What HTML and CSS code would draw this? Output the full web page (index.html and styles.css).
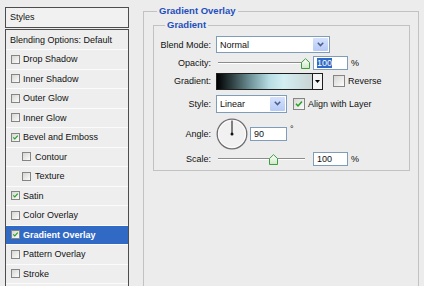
FILE: index.html
```html
<!DOCTYPE html>
<html>
<head>
<meta charset="utf-8">
<link rel="stylesheet" href="styles.css">
</head>
<body>
<div class="dialog">
  <aside class="styles-panel">
    <div class="styles-head">Styles</div>
    <ul class="style-list">
      <li class="blend">Blending Options: Default</li>
      <li><span class="cb"></span>Drop Shadow</li>
      <li><span class="cb"></span>Inner Shadow</li>
      <li><span class="cb"></span>Outer Glow</li>
      <li><span class="cb"></span>Inner Glow</li>
      <li><span class="cb"><svg viewBox="0 0 9 9"><path d="M1.6 4.3 L3.6 6.4 L7.4 2.2" fill="none" stroke="#23a323" stroke-width="1.5"/></svg></span>Bevel and Emboss</li>
      <li class="sub"><span class="cb"></span>Contour</li>
      <li class="sub"><span class="cb"></span>Texture</li>
      <li><span class="cb"><svg viewBox="0 0 9 9"><path d="M1.6 4.3 L3.6 6.4 L7.4 2.2" fill="none" stroke="#23a323" stroke-width="1.5"/></svg></span>Satin</li>
      <li><span class="cb"></span>Color Overlay</li>
      <li class="active"><span class="cb"><svg viewBox="0 0 9 9"><path d="M1.6 4.3 L3.6 6.4 L7.4 2.2" fill="none" stroke="#23a323" stroke-width="1.5"/></svg></span>Gradient Overlay</li>
      <li><span class="cb"></span>Pattern Overlay</li>
      <li><span class="cb"></span>Stroke</li>
    </ul>
  </aside>

  <fieldset class="group outer">
    <legend>Gradient Overlay</legend>
    <fieldset class="group inner">
      <legend>Gradient</legend>
      <div class="form">
        <div class="lbl">Blend Mode:</div>
        <div class="ctl">
          <div class="select blend-sel">
            <span class="val">Normal</span>
            <span class="btn"><svg width="7" height="5" viewBox="0 0 7 5"><path d="M0.8 0.8 L3.5 3.6 L6.2 0.8" fill="none" stroke="#4a5f8a" stroke-width="1.5"/></svg></span>
          </div>
        </div>

        <div class="lbl">Opacity:</div>
        <div class="ctl">
          <div class="slider">
            <div class="track"></div>
            <svg class="thumb thumb-opacity" width="9" height="11" viewBox="0 0 9 11"><defs><linearGradient id="tg1" x1="0" y1="0" x2="0" y2="1"><stop offset="0" stop-color="#ffffff"/><stop offset="1" stop-color="#cfe8c6"/></linearGradient></defs><path d="M0.5 10.5 V4.5 L4.5 0.7 L8.5 4.5 V10.5 Z" fill="url(#tg1)" stroke="#3c9e3c"/></svg>
          </div>
          <div class="num"><span class="sel">100</span></div>
          <span class="unit">%</span>
        </div>

        <div class="lbl">Gradient:</div>
        <div class="ctl">
          <div class="grad">
            <div class="grad-fill"></div>
            <div class="grad-btn"><svg width="5" height="3" viewBox="0 0 5 3"><path d="M0 0 H5 L2.5 3 Z" fill="#000"/></svg></div>
          </div>
          <span class="check reverse"><span class="cb lg"></span>Reverse</span>
        </div>

        <div class="lbl">Style:</div>
        <div class="ctl">
          <div class="select style-sel">
            <span class="val">Linear</span>
            <span class="btn"><svg width="7" height="5" viewBox="0 0 7 5"><path d="M0.8 0.8 L3.5 3.6 L6.2 0.8" fill="none" stroke="#4a5f8a" stroke-width="1.5"/></svg></span>
          </div>
          <span class="check align"><span class="cb lg"><svg viewBox="0 0 12 12"><path d="M2.4 5.8 L4.8 8.4 L9.6 3" fill="none" stroke="#23a323" stroke-width="1.8"/></svg></span>Align with Layer</span>
        </div>

        <div class="lbl">Angle:</div>
        <div class="ctl">
          <svg class="dial" width="32" height="32" viewBox="0 0 32 32">
            <circle cx="16" cy="16" r="14.8" fill="#f1f1f1" stroke="#6f6f6f" stroke-width="1.3"/>
            <circle cx="16" cy="16" r="13.6" fill="none" stroke="#ffffff" stroke-width="0.8"/>
            <path d="M16 16 V2.5" stroke="#111" stroke-width="1"/>
            <circle cx="16" cy="16" r="1.5" fill="#111"/>
          </svg>
          <div class="num angle">90</div>
          <span class="deg">°</span>
        </div>

        <div class="lbl">Scale:</div>
        <div class="ctl">
          <div class="slider">
            <div class="track"></div>
            <svg class="thumb thumb-scale" width="9" height="11" viewBox="0 0 9 11"><defs><linearGradient id="tg2" x1="0" y1="0" x2="0" y2="1"><stop offset="0" stop-color="#ffffff"/><stop offset="1" stop-color="#cfe8c6"/></linearGradient></defs><path d="M0.5 10.5 V4.5 L4.5 0.7 L8.5 4.5 V10.5 Z" fill="url(#tg2)" stroke="#3c9e3c"/></svg>
          </div>
          <div class="num">100</div>
          <span class="unit">%</span>
        </div>
      </div>
    </fieldset>
  </fieldset>
</div>
</body>
</html>
```

FILE: styles.css
```css
html, body {
  margin: 0;
  height: 286px;
  overflow: hidden;
}
body {
  background: #ececec;
  font-family: "Liberation Sans", Arial, sans-serif;
  font-size: 9px;
  color: #111;
}
.dialog {
  display: flex;
  align-items: flex-start;
  height: 286px;
  overflow: hidden;
}

/* left styles list */
.styles-panel {
  width: 124px;
  margin: 7px 0 0 5px;
  flex: none;
}
.styles-head {
  height: 19px;
  line-height: 19px;
  border: 1px solid #4d4d4d;
  background: #f1f1f1;
  padding-left: 4px;
}
.style-list {
  list-style: none;
  margin: 1px 0 0;
  padding: 0;
  border: 1px solid #4d4d4d;
  border-bottom: 0;
  background: #eeeeee;
  height: 257px;
  box-sizing: border-box;
  overflow: hidden;
}
.style-list li {
  height: 18.5px;
  border-bottom: 1px solid #fbfbfb;
  display: flex;
  align-items: center;
  gap: 3px;
  padding-left: 5px;
}
.style-list li.blend {
  height: 19px;
  padding-left: 4px;
}
.style-list li.sub {
  padding-left: 16px;
  gap: 4px;
}
.style-list li.active {
  background: #316ac5;
  color: #fff;
  font-weight: bold;
}

.cb {
  width: 9px;
  height: 9px;
  box-sizing: border-box;
  border: 1px solid #858585;
  background: linear-gradient(135deg, #d6d6d2, #fcfcfc);
  display: inline-flex;
  flex: none;
}
.cb svg {
  width: 100%;
  height: 100%;
  display: block;
}
.cb.lg {
  width: 12px;
  height: 12px;
}

/* fieldsets */
.group {
  border: 1px solid #c2c2c2;
  margin: 0;
  min-width: 0;
}
.group > legend {
  padding: 0 2px;
  font-weight: bold;
  font-size: 9.5px;
  line-height: 12px;
  color: #1f4fbd;
}
.outer {
  margin: 5px 0 0 14px;
  width: 276px;
  height: 281px;
  box-sizing: border-box;
  border-bottom: 0;
  padding: 2px 8px 0 9px;
  flex: none;
}
.outer > legend {
  margin-left: 4px;
}
.inner {
  padding: 4px 0 2px;
}
.inner > legend {
  margin-left: 11px;
}

/* form grid */
.form {
  display: grid;
  grid-template-columns: 57px auto;
  grid-template-rows: 19px 18px 18px 27px 33px 18px;
  column-gap: 5px;
  align-items: center;
}
.lbl {
  text-align: right;
}
.ctl {
  display: flex;
  align-items: center;
}

.select {
  height: 17px;
  box-sizing: border-box;
  border: 1px solid #7f9db9;
  background: #fff;
  display: flex;
}
.select .val {
  flex: 1;
  padding-left: 3px;
  display: flex;
  align-items: center;
}
.select .btn {
  width: 15px;
  margin: 1px;
  border-radius: 1px;
  background: linear-gradient(#d6e1fc, #b6caf6);
  display: flex;
  align-items: center;
  justify-content: center;
}
.blend-sel {
  width: 114px;
}
.style-sel {
  width: 71px;
  height: 18px;
}

.slider {
  width: 93px;
  height: 14px;
  position: relative;
  display: flex;
  align-items: center;
}
.track {
  flex: 1;
  margin: 0 4px 0 2px;
  height: 0;
  border-top: 1px solid #8c8c8c;
  border-bottom: 1px solid #fff;
}
.thumb {
  position: absolute;
  top: 2px;
}
.thumb-opacity {
  left: 85px;
}
.thumb-scale {
  left: 53px;
}

.num {
  width: 35px;
  height: 14px;
  box-sizing: border-box;
  border: 1px solid #7f9db9;
  background: #fff;
  margin-left: 4px;
  padding-left: 3px;
  display: flex;
  align-items: center;
}
.num .sel {
  background: #316ac5;
  color: #fff;
}
.num.angle {
  width: 37px;
  margin-left: 2px;
}
.unit {
  margin-left: 3px;
}
.deg {
  margin-left: 3px;
  align-self: flex-start;
  margin-top: 6px;
}

.grad {
  width: 107px;
  height: 17px;
  box-sizing: border-box;
  border: 1px solid #1e1e1e;
  display: flex;
}
.grad-fill {
  flex: 1;
  background: linear-gradient(to right, #000 0%, #2c3c3e 15%, #6e9298 35%, #b6dde3 55%, #d3eef2 70%, #c9d3d4 100%);
}
.grad-btn {
  width: 9px;
  border-left: 1px solid #1e1e1e;
  background: #f4f4f4;
  display: flex;
  align-items: center;
  justify-content: center;
}
.check {
  display: flex;
  align-items: center;
  gap: 3px;
}
.reverse {
  margin-left: 10px;
}
.align {
  margin-left: 6px;
}
.dial {
  display: block;
  flex: none;
}
```
